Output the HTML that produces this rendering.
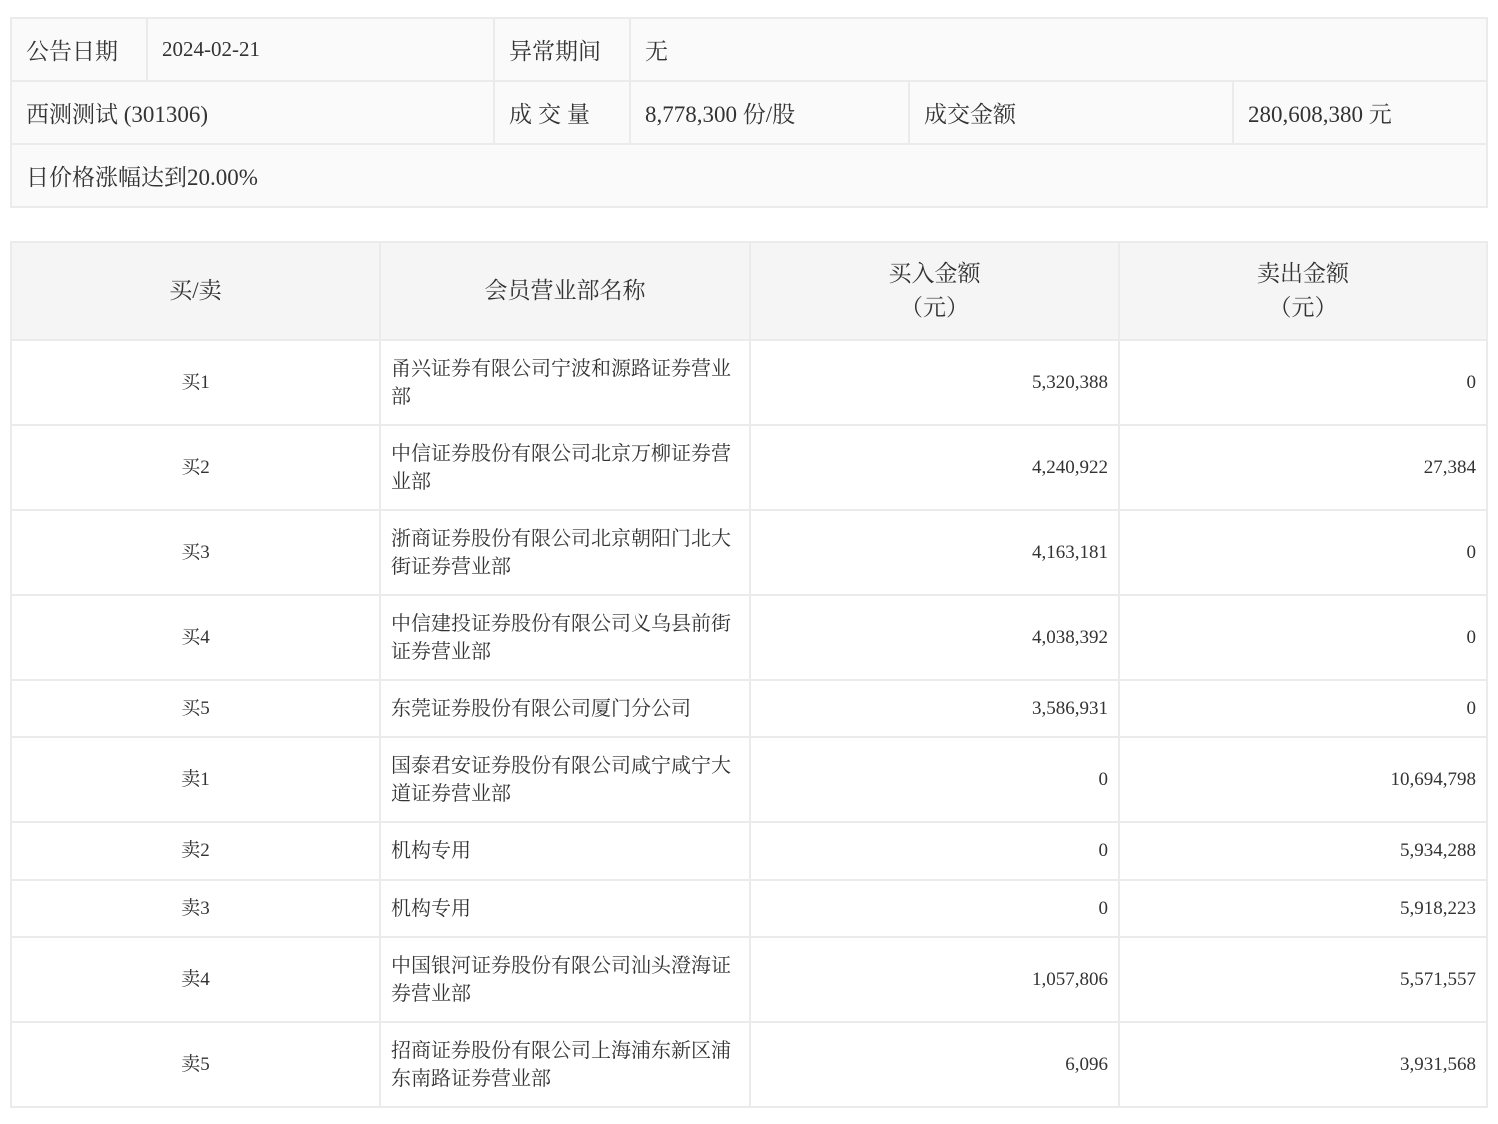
<!DOCTYPE html>
<html><head><meta charset="utf-8"><style>
body{margin:0;background:#fff;font-family:"Liberation Serif","Noto Serif CJK SC",serif;color:#333;}
table{border-collapse:collapse;position:absolute;left:10px;table-layout:fixed;}
td{border:2px solid #ebebeb;padding:0;}
#t1{top:17px;width:1478px;background:#fafafa;font-size:23px;}
#t1 td{height:61px;padding-left:14px;}
#t2{top:241px;width:1478px;font-size:19px;}
#t2 th{background:#f5f5f5;border:2px solid #ebebeb;font-weight:normal;font-size:23px;height:94px;line-height:34px;}
#t2 td{line-height:28px;}
.c{text-align:center}.r{text-align:right;padding-right:10px}.l{padding-left:10px;padding-right:18px;font-size:20px}
</style></head><body>
<table id="t1">
<col style="width:136px"><col style="width:347px"><col style="width:136px"><col style="width:279px"><col style="width:324px"><col>
<tr><td>公告日期</td><td style="font-size:21px">2024-02-21</td><td>异常期间</td><td colspan="3">无</td></tr>
<tr><td colspan="2">西测测试 (301306)</td><td style="letter-spacing:6px">成交量</td><td>8,778,300 份/股</td><td>成交金额</td><td>280,608,380 元</td></tr>
<tr><td colspan="6">日价格涨幅达到20.00%</td></tr>
</table>
<table id="t2">
<col style="width:369px"><col style="width:370px"><col style="width:369px"><col>
<tr><th>买/卖</th><th>会员营业部名称</th><th>买入金额<br>（元）</th><th>卖出金额<br>（元）</th></tr>
<tr style="height:85px"><td class="c">买1</td><td class="l">甬兴证券有限公司宁波和源路证券营业部</td><td class="r">5,320,388</td><td class="r">0</td></tr>
<tr style="height:85px"><td class="c">买2</td><td class="l">中信证券股份有限公司北京万柳证券营业部</td><td class="r">4,240,922</td><td class="r">27,384</td></tr>
<tr style="height:85px"><td class="c">买3</td><td class="l">浙商证券股份有限公司北京朝阳门北大街证券营业部</td><td class="r">4,163,181</td><td class="r">0</td></tr>
<tr style="height:85px"><td class="c">买4</td><td class="l">中信建投证券股份有限公司义乌县前街证券营业部</td><td class="r">4,038,392</td><td class="r">0</td></tr>
<tr style="height:57px"><td class="c">买5</td><td class="l">东莞证券股份有限公司厦门分公司</td><td class="r">3,586,931</td><td class="r">0</td></tr>
<tr style="height:85px"><td class="c">卖1</td><td class="l">国泰君安证券股份有限公司咸宁咸宁大道证券营业部</td><td class="r">0</td><td class="r">10,694,798</td></tr>
<tr style="height:58px"><td class="c">卖2</td><td class="l">机构专用</td><td class="r">0</td><td class="r">5,934,288</td></tr>
<tr style="height:57px"><td class="c">卖3</td><td class="l">机构专用</td><td class="r">0</td><td class="r">5,918,223</td></tr>
<tr style="height:85px"><td class="c">卖4</td><td class="l">中国银河证券股份有限公司汕头澄海证券营业部</td><td class="r">1,057,806</td><td class="r">5,571,557</td></tr>
<tr style="height:85px"><td class="c">卖5</td><td class="l">招商证券股份有限公司上海浦东新区浦东南路证券营业部</td><td class="r">6,096</td><td class="r">3,931,568</td></tr>
</table>
</body></html>
